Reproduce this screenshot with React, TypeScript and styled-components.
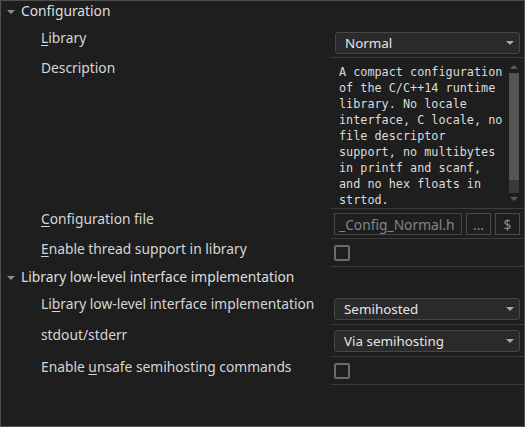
import React from "react";
import styled, { createGlobalStyle } from "styled-components";

const Global = createGlobalStyle`
  html, body { margin: 0; padding: 0; background: #1e1e1e; }
  body { font-family: "Noto Sans", "Open Sans", sans-serif; }
`;

const Panel = styled.div`
  width: 525px;
  height: 427px;
  box-sizing: border-box;
  border: 1px solid #4f4f4f;
  background: #1e1e1e;
  color: #d8d8d8;
  font-size: 13.8px;
  overflow: hidden;
`;

const GroupHeader = styled.div`
  height: 27px;
  box-sizing: border-box;
  padding: 2px 0 0 5px;
  display: flex;
  align-items: flex-start;
  gap: 6px;
  line-height: 16px;
  color: #dedede;
  white-space: nowrap;
`;

const Caret = styled.span`
  width: 0;
  height: 0;
  margin-top: 7px;
  margin-left: 1px;
  border-left: 4px solid transparent;
  border-right: 4px solid transparent;
  border-top: 4px solid #8a8a8a;
`;

const Row = styled.div`
  display: grid;
  grid-template-columns: 330px 193px;
`;

const Label = styled.div`
  padding: 2px 0 0 40px;
  line-height: 16px;
  white-space: nowrap;
  color: #d6d6d6;
`;

const Value = styled.div<{ $pt: number; $pb: number; $pl?: number }>`
  border-bottom: 1px solid #3c3c3c;
  padding: ${(p) => p.$pt}px 4px ${(p) => p.$pb}px ${(p) => p.$pl ?? 4}px;
  display: flex;
  align-items: center;
  gap: 4px;
`;

const Select = styled.div`
  flex: 1;
  height: 22px;
  box-sizing: border-box;
  border: 1px solid #474747;
  border-radius: 3px;
  background: #2a2a2a;
  display: flex;
  align-items: center;
  justify-content: space-between;
  padding: 0 5px 0 9px;
  color: #e4e4e4;
  font-size: 13.4px;
`;

const SelectArrow = styled.span`
  width: 0;
  height: 0;
  border-left: 4px solid transparent;
  border-right: 4px solid transparent;
  border-top: 4px solid #a8a8a8;
`;

const TextBox = styled.div`
  flex: 1;
  height: 146px;
  display: flex;
  overflow: hidden;
`;

const MonoText = styled.div`
  width: 167px;
  padding: 2px 0 0 4px;
  font-family: "DejaVu Sans Mono", "Liberation Mono", monospace;
  font-size: 11.8px;
  line-height: 16px;
  color: #dcdcdc;
`;

const ScrollBar = styled.div`
  width: 12px;
  margin-left: auto;
  display: flex;
  flex-direction: column;
  align-items: center;
  padding-top: 3px;
`;

const ScrollArrow = styled.span<{ $up?: boolean }>`
  width: 0;
  height: 0;
  border-left: 4px solid transparent;
  border-right: 4px solid transparent;
  ${(p) =>
    p.$up
      ? "border-bottom: 4px solid #5a5a5a;"
      : "border-top: 4px solid #5a5a5a;"}
`;

const Track = styled.div`
  width: 10px;
  height: 120px;
  margin: 4px 0;
  background: #3a3a3a;
  display: flex;
  flex-direction: column;
`;

const Thumb = styled.div`
  height: 107px;
  background: #555555;
`;

const Input = styled.div`
  flex: 1;
  height: 22px;
  box-sizing: border-box;
  border: 1px solid #474747;
  display: flex;
  align-items: center;
  padding: 0 4px;
  color: #858585;
  overflow: hidden;
  white-space: nowrap;
`;

const SmallButton = styled.div`
  width: 25px;
  height: 22px;
  box-sizing: border-box;
  border: 1px solid #4a4a4a;
  display: flex;
  align-items: center;
  justify-content: center;
  color: #8a8a8a;
`;

const Checkbox = styled.div`
  width: 16px;
  height: 16px;
  box-sizing: border-box;
  border: 2px solid #6a6a6a;
  border-radius: 2px;
`;

const U = styled.span`
  text-decoration: underline;
  text-underline-offset: 2px;
`;

const description =
  "A compact configuration of the C/C++14 runtime library. No locale interface, C locale, no file descriptor support, no multibytes in printf and scanf, and no hex floats in strtod.";

export default function App() {
  return (
    <>
      <Global />
      <Panel>
        <GroupHeader>
          <Caret />
          Configuration
        </GroupHeader>
        <Row>
          <Label>
            <U>L</U>ibrary
          </Label>
          <Value $pt={4} $pb={3}>
            <Select>
              Normal
              <SelectArrow />
            </Select>
          </Value>
        </Row>
        <Row>
          <Label>Description</Label>
          <Value $pt={4} $pb={0}>
            <TextBox>
              <MonoText>{description}</MonoText>
              <ScrollBar>
                <ScrollArrow $up />
                <Track>
                  <Thumb />
                </Track>
                <ScrollArrow />
              </ScrollBar>
            </TextBox>
          </Value>
        </Row>
        <Row>
          <Label>
            <U>C</U>onfiguration file
          </Label>
          <Value $pt={4} $pb={3} $pl={3}>
            <Input>_Config_Normal.h</Input>
            <SmallButton>...</SmallButton>
            <SmallButton>$</SmallButton>
          </Value>
        </Row>
        <Row>
          <Label>
            <U>E</U>nable thread support in library
          </Label>
          <Value $pt={6} $pb={5} $pl={3}>
            <Checkbox />
          </Value>
        </Row>
        <GroupHeader>
          <Caret />
          Library low-level interface implementation
        </GroupHeader>
        <Row>
          <Label>
            Li<U>b</U>rary low-level interface implementation
          </Label>
          <Value $pt={4} $pb={4} $pl={3}>
            <Select>
              Semihosted
              <SelectArrow />
            </Select>
          </Value>
        </Row>
        <Row>
          <Label>stdout/stderr</Label>
          <Value $pt={5} $pb={4} $pl={3}>
            <Select>
              Via semihosting
              <SelectArrow />
            </Select>
          </Value>
        </Row>
        <Row>
          <Label>
            Enable <U>u</U>nsafe semihosting commands
          </Label>
          <Value $pt={6} $pb={5} $pl={3}>
            <Checkbox />
          </Value>
        </Row>
      </Panel>
    </>
  );
}
